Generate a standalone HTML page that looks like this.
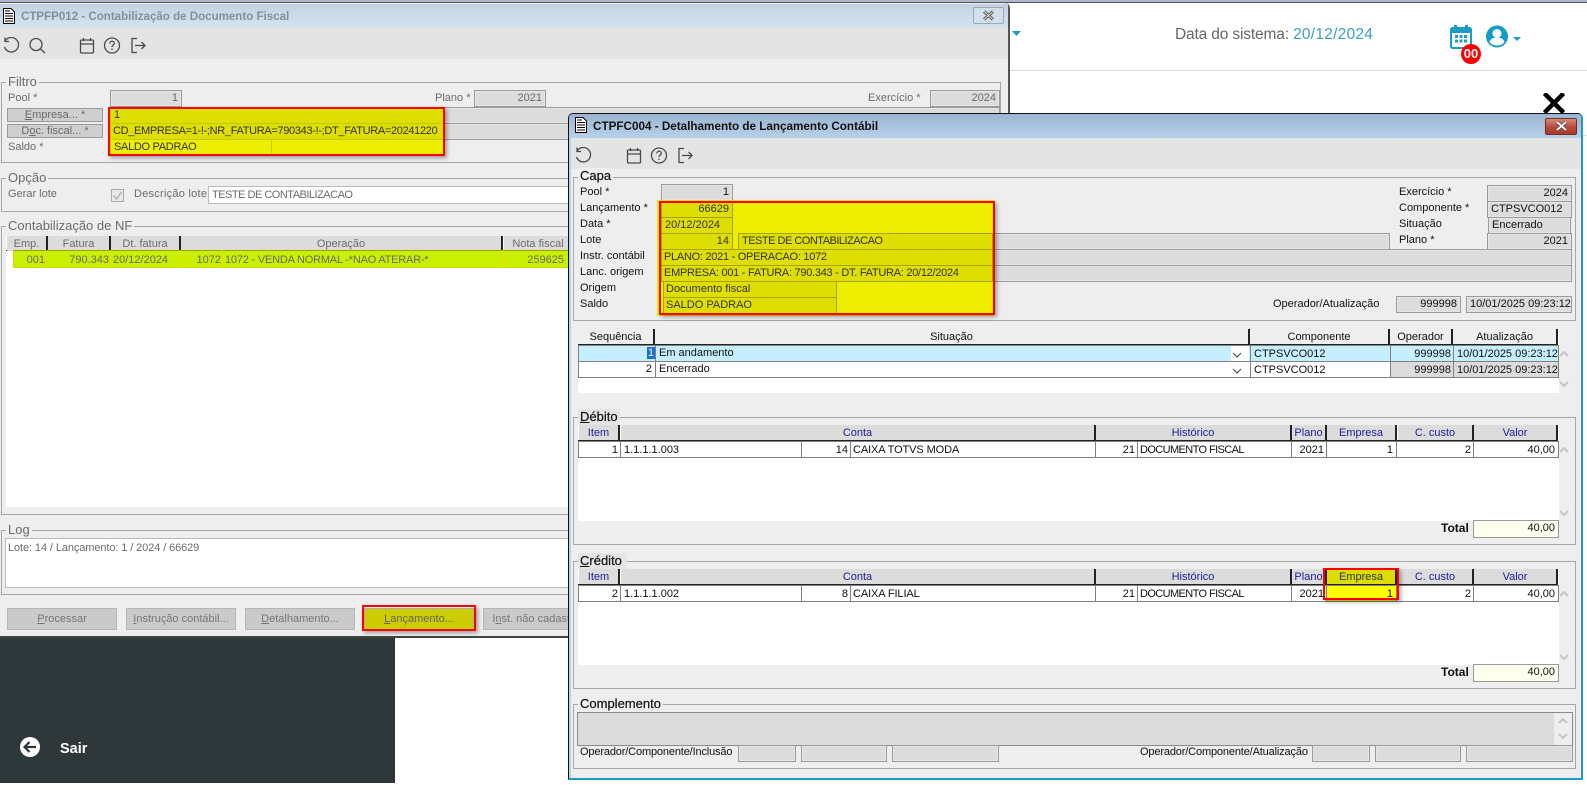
<!DOCTYPE html>
<html lang="pt"><head><meta charset="utf-8"><title>CTPFC004</title>
<style>
html,body{margin:0;padding:0;width:1587px;height:785px;overflow:hidden;background:#fff;font-family:"Liberation Sans",sans-serif;font-size:11px;color:#111}
div,span.a,svg.a{position:absolute;box-sizing:border-box}
.t{white-space:nowrap;height:16px;line-height:16px}
.f{white-space:nowrap;overflow:hidden;border:1px solid #9a9a9a;background:#dcdcdc;height:17px;line-height:15px;padding:0 3px;box-shadow:inset 0 0 0 1px #e6e6e6}
.r{text-align:right}
.b{border:1px solid #a6a6a6}
.l{background:#eee;padding:0 2px;height:16px;line-height:16px;white-space:nowrap;font-size:13px}
.h{background:#dcdcdc;border-right:2px solid #222;text-align:center;height:15px;line-height:16px;white-space:nowrap;overflow:hidden;top:0}
.c{border:1px solid #808080;background:#fff;height:17px;line-height:15px;padding:0 3px;white-space:nowrap;overflow:hidden}
.bl{color:#1c1c9c}
.L .t,.L .f,.L .l,.L .h{color:#6b6b6b}
.btn{background:#cacaca;border:1px solid #b6b6b6;color:#777;text-align:center;height:22px;line-height:20px;top:608px;white-space:nowrap;overflow:hidden}
.yf{background:#dede00;border:1px solid #a5a500;height:17px;line-height:15px;padding:0 3px;white-space:nowrap;overflow:hidden;color:#333}
u{text-decoration:underline}
</style></head><body>

<!-- page header -->
<div style="left:0;top:0;width:1587px;height:3px;background:#a9b8cc;border-bottom:1px solid #555"></div>
<svg class="a" style="left:1012px;top:31px" width="9" height="5"><path d="M0 0H9L4.5 5Z" fill="#1a9cc4"/></svg>
<div class="t" style="left:1175px;top:25px;height:20px;line-height:20px;font-size:15.500px;color:#666;letter-spacing:-.15px">Data do sistema: <span style="color:#3a9fc4;letter-spacing:.25px">20/12/2024</span></div>
<svg class="a" style="left:1449px;top:24px" width="24" height="26" viewBox="0 0 24 26"><rect x="2" y="4" width="20" height="20" rx="1.5" fill="#fff" stroke="#1a9cc4" stroke-width="2"/><rect x="2" y="4" width="20" height="5" fill="#1a9cc4"/><rect x="5" y="1" width="3" height="5" fill="#1a9cc4"/><rect x="16" y="1" width="3" height="5" fill="#1a9cc4"/><path d="M6 11h3v3H6zM10.500 11h3v3h-3zM15 11h3v3h-3zM6 15.500h3v3H6zM10.500 15.500h3v3h-3zM15 15.500h3v3h-3z" fill="#1a9cc4"/></svg>
<div style="left:1461px;top:44px;width:20px;height:20px;border-radius:50%;background:#f00;color:#fff;font-weight:bold;font-size:13px;text-align:center;line-height:19px">00</div>
<svg class="a" style="left:1486px;top:25px" width="36" height="23" viewBox="0 0 36 23"><circle cx="11" cy="11.500" r="11" fill="#159cc6"/><circle cx="11" cy="8.500" r="4.500" fill="#fff"/><path d="M3.500 17c1-3.500 4-4.500 7.500-4.500s6.500 1 7.500 4.500c-2 2.500-4.500 3.500-7.500 3.500S5.500 19.500 3.500 17Z" fill="#fff"/><path d="M27 12h8l-4 4Z" fill="#1a9cc4"/></svg>
<div style="left:1009px;top:70px;width:578px;height:1px;background:#ddd"></div>
<div style="left:1582px;top:135px;width:5px;height:1px;background:#ddd"></div>
<svg class="a" style="left:1543px;top:93px" width="22" height="20" viewBox="0 0 22 20"><path d="M3 2L19 18M19 2L3 18" stroke="#000" stroke-width="4.500" stroke-linecap="square" fill="none"/></svg>

<!-- dark side panel -->
<div style="left:0;top:637px;width:395px;height:146px;background:#2e383a"></div>
<svg class="a" style="left:20px;top:737px" width="20" height="20" viewBox="0 0 20 20"><circle cx="10" cy="10" r="10" fill="#fff"/><path d="M16 10H5M9.500 5L4.500 10l5 5" stroke="#2e383a" stroke-width="2.200" fill="none"/></svg>
<div class="t" style="left:60px;top:740px;height:18px;line-height:18px;color:#fff;font-size:14.500px;font-weight:bold">Sair</div>

<!-- left window -->
<div class="L" style="left:0;top:0;width:1587px;height:785px">
<div style="left:0;top:3px;width:1010px;height:635px;background:#eee;border-right:2px solid #555;border-bottom:2px solid #444;border-top-right-radius:5px"></div>
<div style="left:0;top:4px;width:1008px;height:24px;background:linear-gradient(#c3d2e2,#d6e3f0)"></div>
<div style="left:0;top:28px;width:1008px;height:31px;background:#e4e4e4"></div>
<svg class="a" style="left:3px;top:8px" width="12" height="16" viewBox="0 0 12 16"><path d="M.5.500H8L11.500 4V15.500H.5Z" fill="#fff" stroke="#000"/><path d="M2 3h5M2 5.500h8M2 8h8M2 10.500h8M2 13h8" stroke="#000"/></svg>
<div class="t" style="left:21px;top:9px;font-weight:bold;font-size:11.550px;color:#858f9a">CTPFP012 - Contabilização de Documento Fiscal</div>
<div style="left:973px;top:7px;width:31px;height:17px;border:1px solid #9aa8b8;border-radius:2px;background:#d3dfea"></div>
<svg class="a" style="left:982px;top:10px" width="13" height="11" viewBox="0 0 13 11"><path d="M2 1.500L11 9.500M11 1.500L2 9.500" stroke="#555" stroke-width="3"/><path d="M2 1.500L11 9.500M11 1.500L2 9.500" stroke="#ddd" stroke-width="1"/></svg>
<svg class="a" style="left:2px;top:37px" width="145" height="17" viewBox="0 0 145 17" fill="none" stroke="#4a4a4a" stroke-width="1.300"><path d="M3.500 3.500A7.200 7.200 0 1 1 2.500 10M3 .5V4.500H7"/><circle cx="34" cy="7.500" r="6"/><path d="M38.500 12L43 16"/><rect x="78.500" y="3" width="13" height="13" rx="1"/><path d="M78.500 7H91.500M81.500 1V4M88.500 1V4"/><circle cx="110" cy="8.500" r="7.500"/><path d="M107.800 6.500c0-3 4.500-3 4.500 0 0 1.500-2.300 1.800-2.300 3.500M110 11.500v1.500"/><path d="M135 1.500h-5v14h5M133 8.500h10M139.500 5l3.500 3.500-3.500 3.500"/></svg>

<!-- Filtro -->
<div class="b" style="left:1px;top:82px;width:1000px;height:81px"></div>
<div class="l" style="left:6px;top:74px">Filtro</div>
<div class="t" style="left:8px;top:90px">Pool *</div>
<div class="f r" style="left:110px;top:90px;width:72px">1</div>
<div class="t" style="left:435px;top:90px">Plano *</div>
<div class="f r" style="left:474px;top:90px;width:72px">2021</div>
<div class="t" style="left:868px;top:90px">Exercício *</div>
<div class="f r" style="left:930px;top:90px;width:70px">2024</div>
<div class="f" style="left:7px;top:108px;width:96px;height:14px;line-height:13px;text-align:center;background:#cfcfcf;box-shadow:none"><u>E</u>mpresa... *</div>
<div class="f" style="left:7px;top:124px;width:96px;height:14px;line-height:13px;text-align:center;background:#cfcfcf;box-shadow:none">D<u>o</u>c. fiscal... *</div>
<div class="t" style="left:8px;top:139px">Saldo *</div>
<div class="f" style="left:110px;top:107px;width:890px"></div>
<div class="f" style="left:110px;top:123px;width:890px"></div>
<!-- Opção -->
<div class="b" style="left:1px;top:178px;width:1000px;height:34px"></div>
<div class="l" style="left:6px;top:170px">Opção</div>
<div class="t" style="left:8px;top:186px">Gerar lote</div>
<svg class="a" style="left:111px;top:189px" width="13" height="13" viewBox="0 0 13 13"><rect x=".5" y=".5" width="12" height="12" fill="#e8e8e8" stroke="#aaa"/><path d="M2.500 6.500L5.500 10 10.500 3" stroke="#aaa" stroke-width="1.300" fill="none"/></svg>
<div class="t" style="left:134px;top:186px;letter-spacing:.25px">Descrição lote</div>
<div class="f" style="left:208px;top:186px;width:790px;height:18px;background:#fff;box-shadow:none;border-color:#bbb;letter-spacing:-.5px;line-height:16px">TESTE DE CONTABILIZACAO</div>
<!-- Contabilização -->
<div class="b" style="left:1px;top:226px;width:1000px;height:289px"></div>
<div class="l" style="left:6px;top:218px">Contabilização de NF</div>
<div style="left:6px;top:236px;width:990px;height:271px;background:#fff"></div>
<div style="left:6px;top:250px;width:990px;height:1px;background:#222"></div>
<div class="h" style="left:7px;top:236px;width:41px">Emp.</div>
<div class="h" style="left:48px;top:236px;width:63px">Fatura</div>
<div class="h" style="left:111px;top:236px;width:70px">Dt. fatura</div>
<div class="h" style="left:181px;top:236px;width:322px">Operação</div>
<div class="h" style="left:504px;top:236px;width:70px">Nota fiscal</div>
<div style="left:13px;top:250px;width:560px;height:18px;background:#c8f000;border:1px solid #d8d800;border-top-color:#a0a000"></div>
<div class="t r" style="left:13px;top:252px;width:32px">001</div>
<div class="t r" style="left:48px;top:252px;width:61px">790.343</div>
<div class="t" style="left:113px;top:252px">20/12/2024</div>
<div class="t r" style="left:181px;top:252px;width:40px">1072</div>
<div class="t" style="left:225px;top:252px;letter-spacing:-.2px">1072 - VENDA NORMAL -*NAO ATERAR-*</div>
<div class="t r" style="left:504px;top:252px;width:60px">259625</div>
<div style="left:47px;top:250px;width:1px;height:18px;background:#e0e000"></div>
<div style="left:110px;top:250px;width:1px;height:18px;background:#e0e000"></div>
<div style="left:180px;top:250px;width:1px;height:18px;background:#e0e000"></div>
<div style="left:222px;top:250px;width:1px;height:18px;background:#e0e000"></div>
<div style="left:502px;top:250px;width:1px;height:18px;background:#e0e000"></div>
<!-- Log -->
<div class="b" style="left:1px;top:530px;width:1000px;height:65px"></div>
<div class="l" style="left:6px;top:522px">Log</div>
<div style="left:5px;top:538px;width:990px;height:50px;background:#fff;border:1px solid #bbb"></div>
<div class="t" style="left:8px;top:540px;color:#6b6b6b;letter-spacing:-.1px">Lote: 14 / Lançamento: 1 / 2024 / 66629</div>
<!-- buttons -->
<div class="btn" style="left:7px;width:110px"><u>P</u>rocessar</div>
<div class="btn" style="left:126px;width:110px"><u>I</u>nstrução contábil...</div>
<div class="btn" style="left:245px;width:110px"><u>D</u>etalhamento...</div>
<div class="btn" style="left:364px;width:110px;background:#cccc00;border-color:#aaa;color:#666"><u>L</u>ançamento...</div>
<div style="left:362px;top:605px;width:114px;height:26px;border:2px solid #f00;box-shadow:2px 2px 4px rgba(0,0,0,.35)"></div>
<div class="btn" style="left:483px;width:100px">I<u>n</u>st. não cadastr</div>
<!-- Yellow highlight left -->
<div style="left:109px;top:108px;width:335px;height:47px;background:#eeee00"></div>
<div class="yf" style="left:110px;top:107px;width:334px;background:#dede00;border-color:#c8c800">1</div>
<div class="yf" style="left:110px;top:123px;width:334px;border-color:#c8c800;padding-left:2px;letter-spacing:-.32px">CD_EMPRESA=1-!-;NR_FATURA=790343-!-;DT_FATURA=20241220</div>
<div class="yf" style="left:110px;top:139px;width:162px;background:#eeee00;border-color:#c8c800;letter-spacing:-.3px">SALDO PADRAO</div>
<div style="left:108px;top:107px;width:337px;height:49px;border:2px solid #f00;box-shadow:2px 2px 4px rgba(0,0,0,.35)"></div>
</div>

<!-- right window -->
<div style="left:568px;top:113px;width:1015px;height:667px;background:#eee;border:1px solid #111;border-bottom:2px solid #1a9cc4;border-right:2px solid #1a9cc4;border-radius:5px 5px 0 0;box-shadow:inset 1px 0 0 #b5d4ec,inset 2px 0 0 #b5d4ec"></div>
<div style="left:569px;top:114px;width:1012px;height:24px;background:linear-gradient(#9ab5d2,#b8d0e8);border-radius:4px 4px 0 0"></div>
<div style="left:571px;top:138px;width:1010px;height:31px;background:#e4e4e4"></div>
<svg class="a" style="left:575px;top:117px" width="12" height="16" viewBox="0 0 12 16"><path d="M.5.500H8L11.500 4V15.500H.5Z" fill="#fff" stroke="#000"/><path d="M2 3h5M2 5.500h8M2 8h8M2 10.500h8M2 13h8" stroke="#000"/></svg>
<div class="t" style="left:593px;top:119px;font-weight:bold;font-size:11.700px;color:#111">CTPFC004 - Detalhamento de Lançamento Contábil</div>
<div style="left:1545px;top:118px;width:32px;height:17px;border:1px solid #7a2a20;border-radius:2px;background:linear-gradient(#d8897c,#b8483a 55%,#a83a2c)"></div>
<svg class="a" style="left:1555px;top:120px" width="13" height="12" viewBox="0 0 13 12"><path d="M2 2L11 10M11 2L2 10" stroke="#555" stroke-width="3.400"/><path d="M2 2L11 10M11 2L2 10" stroke="#fff" stroke-width="1.800"/></svg>
<svg class="a" style="left:574px;top:147px" width="145" height="17" viewBox="0 0 145 17" fill="none" stroke="#4a4a4a" stroke-width="1.300"><path d="M3.500 3.500A7.200 7.200 0 1 1 2.500 10M3 .5V4.500H7"/><rect x="53.500" y="3" width="13" height="13" rx="1"/><path d="M53.500 7H66.500M56.500 1V4M63.500 1V4"/><circle cx="85" cy="8.500" r="7.500"/><path d="M82.800 6.500c0-3 4.500-3 4.500 0 0 1.500-2.300 1.800-2.300 3.500M85 11.500v1.500"/><path d="M110 1.500h-5v14h5M108 8.500h10M114.500 5l3.500 3.500-3.500 3.500"/></svg>

<!-- Capa -->
<div class="b" style="left:573px;top:177px;width:1003px;height:144px"></div>
<div class="l" style="left:578px;top:168px;font-weight:normal;-webkit-text-stroke:.2px #111">Capa</div>
<div class="t" style="left:580px;top:184px">Pool *</div>
<div class="t" style="left:580px;top:200px">Lançamento *</div>
<div class="t" style="left:580px;top:216px">Data *</div>
<div class="t" style="left:580px;top:232px">Lote</div>
<div class="t" style="left:580px;top:248px">Instr. contábil</div>
<div class="t" style="left:580px;top:264px">Lanc. origem</div>
<div class="t" style="left:580px;top:280px">Origem</div>
<div class="t" style="left:580px;top:296px">Saldo</div>
<div class="f r" style="left:661px;top:184px;width:72px">1</div>
<div class="f" style="left:738px;top:233px;width:652px"></div>
<div class="f" style="left:661px;top:249px;width:911px"></div>
<div class="f" style="left:661px;top:265px;width:911px"></div>
<div class="t" style="left:1399px;top:184px">Exercício *</div>
<div class="t" style="left:1399px;top:200px">Componente *</div>
<div class="t" style="left:1399px;top:216px">Situação</div>
<div class="t" style="left:1399px;top:232px">Plano *</div>
<div class="f r" style="left:1487px;top:185px;width:85px">2024</div>
<div class="f" style="left:1487px;top:201px;width:85px">CTPSVCO012</div>
<div class="f" style="left:1488px;top:217px;width:83px">Encerrado</div>
<div class="f r" style="left:1487px;top:233px;width:85px">2021</div>
<div class="t" style="left:1273px;top:296px">Operador/Atualização</div>
<div class="f r" style="left:1396px;top:296px;width:65px">999998</div>
<div class="f" style="left:1466px;top:296px;width:106px">10/01/2025 09:23:12</div>
<!-- yellow capa -->
<div style="left:657px;top:200px;width:337px;height:116px;background:#eeee00"></div>
<div class="yf r" style="left:661px;top:201px;width:72px">66629</div>
<div class="yf" style="left:661px;top:217px;width:72px">20/12/2024</div>
<div class="yf r" style="left:661px;top:233px;width:72px">14</div>
<div class="yf" style="left:738px;top:233px;width:255px;padding-left:3px;letter-spacing:-.5px">TESTE DE CONTABILIZACAO</div>
<div class="yf" style="left:661px;top:249px;width:332px;padding-left:2px;letter-spacing:-.28px">PLANO: 2021 - OPERACAO: 1072</div>
<div class="yf" style="left:661px;top:265px;width:332px;padding-left:2px;letter-spacing:-.27px">EMPRESA: 001 - FATURA: 790.343 - DT. FATURA: 20/12/2024</div>
<div class="yf" style="left:663px;top:281px;width:174px;padding-left:2px">Documento fiscal</div>
<div class="yf" style="left:663px;top:297px;width:174px;padding-left:2px">SALDO PADRAO</div>
<div style="left:659px;top:201px;width:336px;height:114px;border:2px solid #f00;box-shadow:2px 2px 4px rgba(0,0,0,.35)"></div>

<!-- Seq grid -->
<div style="left:578px;top:329px;width:981px;height:64px;background:#fff"></div>
<div class="h" style="left:578px;top:329px;width:77px;background:#eee">Sequência</div>
<div class="h" style="left:655px;top:329px;width:595px;background:#eee">Situação</div>
<div class="h" style="left:1250px;top:329px;width:140px;background:#eee">Componente</div>
<div class="h" style="left:1390px;top:329px;width:63px;background:#eee">Operador</div>
<div class="h" style="left:1453px;top:329px;width:105px;background:#eee">Atualização</div>
<div style="left:578px;top:344px;width:980px;height:1px;background:#222"></div>
<div class="c r" style="left:578px;top:345px;width:78px;background:#c5eeff;padding-right:0"><span style="background:#1a6fd0;color:#fff;padding:0 1px">1</span></div>
<div class="c" style="left:655px;top:345px;width:596px;background:#c5eeff;border-left-color:#808080">Em andamento</div>
<div class="c" style="left:1250px;top:345px;width:141px;background:#c5eeff;line-height:16px">CTPSVCO012</div>
<div class="c r" style="left:1390px;top:345px;width:64px;background:#c5eeff;padding-right:2px;line-height:16px">999998</div>
<div class="c" style="left:1453px;top:345px;width:106px;background:#c5eeff;line-height:16px">10/01/2025 09:23:12</div>
<div style="left:1231px;top:346px;width:18px;height:15px;background:#fff"></div>
<div class="c r" style="left:578px;top:361px;width:78px">2</div>
<div class="c" style="left:655px;top:361px;width:596px">Encerrado</div>
<div class="c" style="left:1250px;top:361px;width:141px;line-height:16px">CTPSVCO012</div>
<div class="c r" style="left:1390px;top:361px;width:64px;background:#dcdcdc;padding-right:2px;line-height:16px">999998</div>
<div class="c" style="left:1453px;top:361px;width:106px;background:#dcdcdc;line-height:16px">10/01/2025 09:23:12</div>
<svg class="a" style="left:1230px;top:345px" width="346" height="48" viewBox="0 0 346 48" fill="none"><path d="M3 8l4 4 4-4M3 24l4 4 4-4" stroke="#555" stroke-width="1.200"/><path d="M330 11l4-4 4 4" stroke="#c4c4c4" stroke-width="2"/><path d="M330 37l4 4 4-4" stroke="#c4c4c4" stroke-width="2"/></svg>

<!-- Débito -->
<div class="b" style="left:573px;top:417px;width:1003px;height:128px"></div>
<div class="l" style="left:578px;top:409px;background:#e4e4e4;width:42px;-webkit-text-stroke:.2px #111"><u>D</u>ébito</div>
<div style="left:578px;top:425px;width:981px;height:96px;background:#fff"></div>
<div class="h bl" style="left:579px;top:425px;width:41px">Item</div>
<div class="h bl" style="left:621px;top:425px;width:475px">Conta</div>
<div class="h bl" style="left:1096px;top:425px;width:196px">Histórico</div>
<div class="h bl" style="left:1292px;top:425px;width:35px">Plano</div>
<div class="h bl" style="left:1327px;top:425px;width:70px">Empresa</div>
<div class="h bl" style="left:1398px;top:425px;width:76px">C. custo</div>
<div class="h bl" style="left:1474px;top:425px;width:84px">Valor</div>
<div style="left:578px;top:440px;width:980px;height:1px;background:#222"></div>
<div class="c r" style="left:578px;top:441px;width:43px;padding-right:2px;line-height:16px">1</div>
<div class="c" style="left:620px;top:441px;width:182px;line-height:16px">1.1.1.1.003</div>
<div class="c r" style="left:801px;top:441px;width:50px;padding-right:2px;line-height:16px">14</div>
<div class="c" style="left:850px;top:441px;width:246px;padding-left:2px;letter-spacing:-.1px;line-height:16px">CAIXA TOTVS MODA</div>
<div class="c r" style="left:1095px;top:441px;width:43px;padding-right:2px;line-height:16px">21</div>
<div class="c" style="left:1137px;top:441px;width:155px;padding-left:2px;letter-spacing:-.6px;line-height:16px">DOCUMENTO FISCAL</div>
<div class="c r" style="left:1291px;top:441px;width:36px;padding-right:2px;line-height:16px">2021</div>
<div class="c r" style="left:1326px;top:441px;width:71px;line-height:16px">1</div>
<div class="c r" style="left:1396px;top:441px;width:78px;padding-right:2px;line-height:16px">2</div>
<div class="c r" style="left:1473px;top:441px;width:86px;line-height:16px">40,00</div>
<div class="t" style="left:1441px;top:520px;font-weight:bold;font-size:12px">Total</div>
<div class="f r" style="left:1473px;top:520px;width:86px;height:18px;background:#fffff0;box-shadow:none">40,00</div>
<svg class="a" style="left:1560px;top:445px" width="16" height="76" viewBox="0 0 16 76" fill="none" stroke="#c4c4c4" stroke-width="2"><path d="M0 7l4-4 4 4M0 66l4 4 4-4"/></svg>

<!-- Crédito -->
<div class="b" style="left:573px;top:561px;width:1003px;height:128px"></div>
<div class="l" style="left:578px;top:553px;background:#e4e4e4;width:49px;-webkit-text-stroke:.2px #111"><u>C</u>rédito</div>
<div style="left:578px;top:569px;width:981px;height:96px;background:#fff"></div>
<div class="h bl" style="left:579px;top:569px;width:41px">Item</div>
<div class="h bl" style="left:621px;top:569px;width:475px">Conta</div>
<div class="h bl" style="left:1096px;top:569px;width:196px">Histórico</div>
<div class="h bl" style="left:1292px;top:569px;width:35px">Plano</div>
<div class="h" style="left:1327px;top:569px;width:70px;background:#dcdc00;color:#333">Empresa</div>
<div class="h bl" style="left:1398px;top:569px;width:76px">C. custo</div>
<div class="h bl" style="left:1474px;top:569px;width:84px">Valor</div>
<div style="left:578px;top:584px;width:980px;height:1px;background:#222"></div>
<div class="c r" style="left:578px;top:585px;width:43px;padding-right:2px;line-height:16px">2</div>
<div class="c" style="left:620px;top:585px;width:182px;line-height:16px">1.1.1.1.002</div>
<div class="c r" style="left:801px;top:585px;width:50px;padding-right:2px;line-height:16px">8</div>
<div class="c" style="left:850px;top:585px;width:246px;padding-left:2px;letter-spacing:-.1px;line-height:16px">CAIXA FILIAL</div>
<div class="c r" style="left:1095px;top:585px;width:43px;padding-right:2px;line-height:16px">21</div>
<div class="c" style="left:1137px;top:585px;width:155px;padding-left:2px;letter-spacing:-.6px;line-height:16px">DOCUMENTO FISCAL</div>
<div class="c r" style="left:1291px;top:585px;width:36px;padding-right:2px;line-height:16px">2021</div>
<div class="c r" style="left:1326px;top:585px;width:71px;background:#ff0;line-height:16px">1</div>
<div class="c r" style="left:1396px;top:585px;width:78px;padding-right:2px;line-height:16px">2</div>
<div class="c r" style="left:1473px;top:585px;width:86px;line-height:16px">40,00</div>
<div style="left:1323px;top:568px;width:76px;height:32px;border:2px solid #f00;box-shadow:2px 2px 4px rgba(0,0,0,.35)"></div>
<div class="t" style="left:1441px;top:664px;font-weight:bold;font-size:12px">Total</div>
<div class="f r" style="left:1473px;top:664px;width:86px;height:18px;background:#fffff0;box-shadow:none">40,00</div>
<svg class="a" style="left:1560px;top:589px" width="16" height="76" viewBox="0 0 16 76" fill="none" stroke="#c4c4c4" stroke-width="2"><path d="M0 7l4-4 4 4M0 66l4 4 4-4"/></svg>

<!-- Complemento -->
<div class="b" style="left:573px;top:704px;width:1003px;height:65px"></div>
<div class="l" style="left:578px;top:696px;-webkit-text-stroke:.2px #111">Complemento</div>
<div style="left:577px;top:712px;width:996px;height:34px;background:#dcdcdc;border:1px solid #8a8a8a"></div>
<div style="left:1554px;top:713px;width:18px;height:32px;background:#eee"></div>
<svg class="a" style="left:1558px;top:716px" width="12" height="26" viewBox="0 0 12 26" fill="none" stroke="#c4c4c4" stroke-width="2"><path d="M1 7l4-4 4 4M1 18l4 4 4-4"/></svg>
<div class="t" style="left:580px;top:744px;letter-spacing:-.15px">Operador/Componente/Inclusão</div>
<div class="f" style="left:738px;top:745px;width:58px"></div>
<div class="f" style="left:801px;top:745px;width:86px"></div>
<div class="f" style="left:892px;top:745px;width:107px"></div>
<div class="t" style="left:1140px;top:744px;letter-spacing:-.15px">Operador/Componente/Atualização</div>
<div class="f" style="left:1312px;top:745px;width:58px"></div>
<div class="f" style="left:1375px;top:745px;width:86px"></div>
<div class="f" style="left:1466px;top:745px;width:107px"></div>
</body></html>
